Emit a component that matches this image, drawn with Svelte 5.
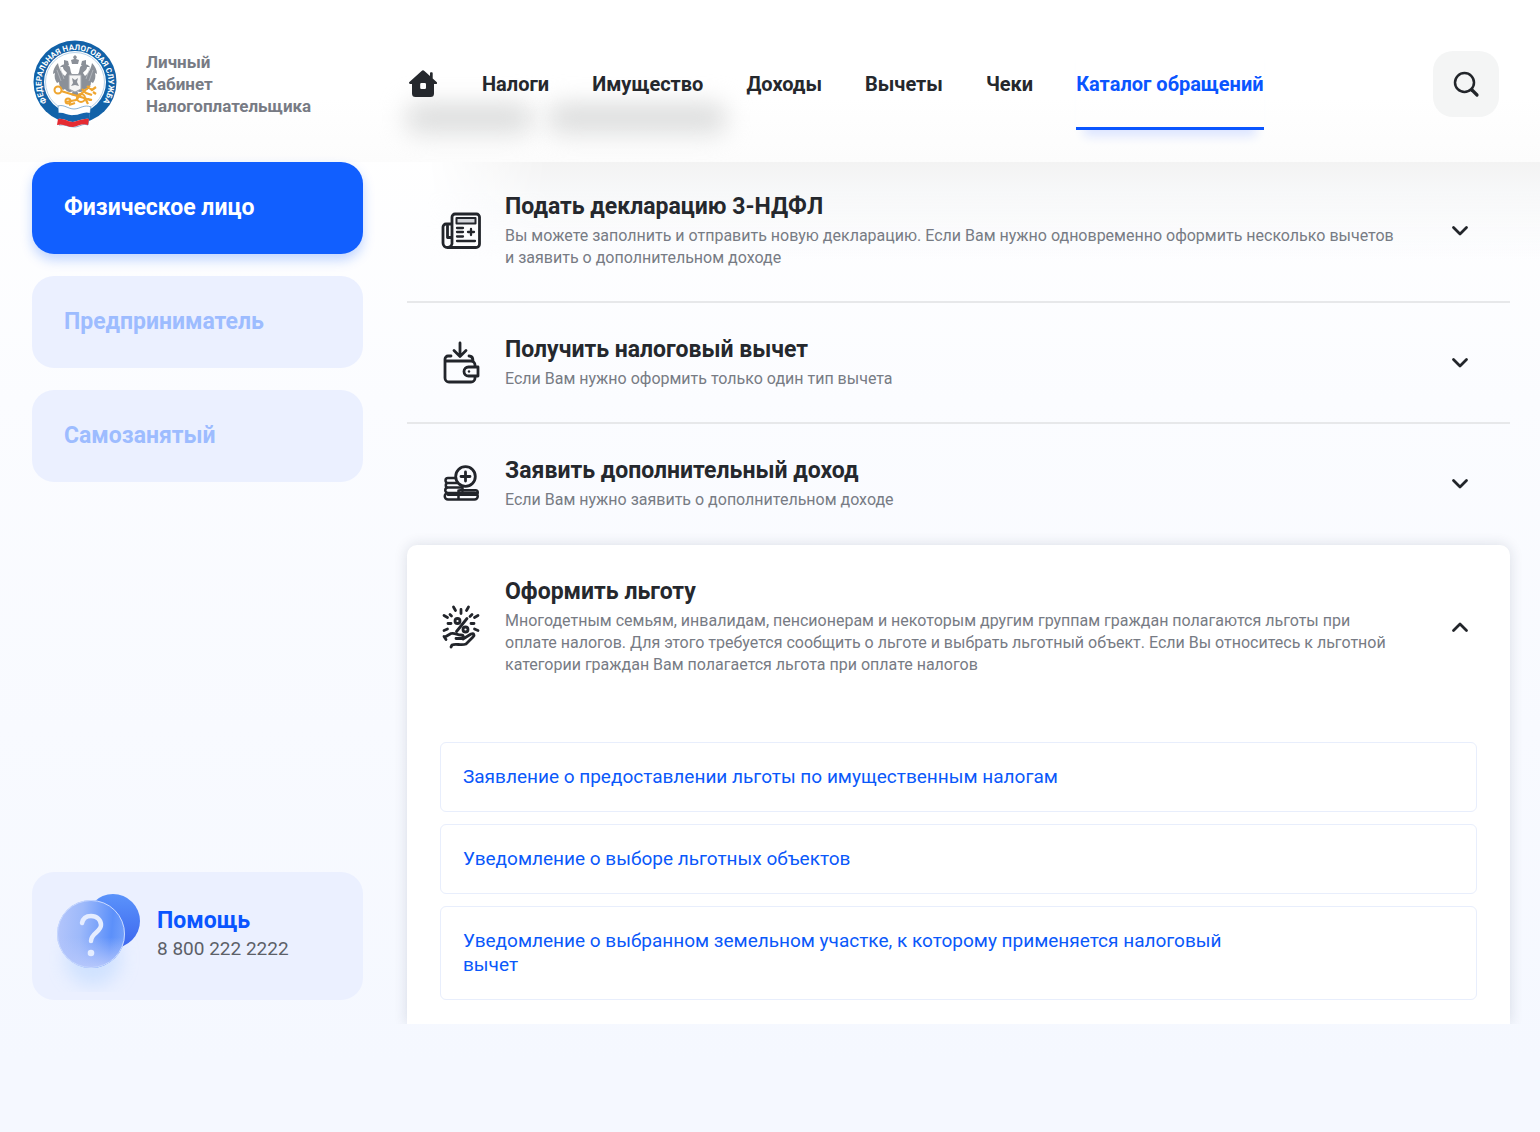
<script>
  const navItems = ['Налоги', 'Имущество', 'Доходы', 'Вычеты', 'Чеки', 'Каталог обращений'];
  const roles = ['Физическое лицо', 'Предприниматель', 'Самозанятый'];
  const sections = [
    {
      icon: 'declaration',
      title: 'Подать декларацию 3-НДФЛ',
      text: 'Вы можете заполнить и отправить новую декларацию. Если Вам нужно одновременно оформить несколько вычетов и заявить о дополнительном доходе',
      links: []
    },
    {
      icon: 'wallet',
      title: 'Получить налоговый вычет',
      text: 'Если Вам нужно оформить только один тип вычета',
      links: []
    },
    {
      icon: 'coins',
      title: 'Заявить дополнительный доход',
      text: 'Если Вам нужно заявить о дополнительном доходе',
      links: []
    },
    {
      icon: 'benefit',
      title: 'Оформить льготу',
      text: 'Многодетным семьям, инвалидам, пенсионерам и некоторым другим группам граждан полагаются льготы при оплате налогов. Для этого требуется сообщить о льготе и выбрать льготный объект. Если Вы относитесь к льготной категории граждан Вам полагается льгота при оплате налогов',
      links: [
        'Заявление о предоставлении льготы по имущественным налогам',
        'Уведомление о выборе льготных объектов',
        'Уведомление о выбранном земельном участке, к которому применяется налоговый вычет'
      ]
    }
  ];

  let activeNav = $state(5);
  let activeRole = $state(0);
  let open = $state(3);
</script>

<div class="page">
  <header class="header">
    <a class="brand" href="#home">
      <svg class="logo" viewBox="0 0 84 88" aria-hidden="true">
        <defs>
          <path id="ring" d="M17.500 66.500A33.500 33.500 0 1 1 66.500 66.500" />
        </defs>
        <circle cx="42" cy="42" r="41.500" fill="#1262a8" />
        <circle cx="42" cy="42" r="31" fill="#fff" />
        <circle cx="42" cy="42" r="29.500" fill="none" stroke="#b9d2e8" stroke-width="1" />
        <text class="ring-text"><textPath href="#ring" startOffset="50%" text-anchor="middle">ФЕДЕРАЛЬНАЯ НАЛОГОВАЯ СЛУЖБА</textPath></text>
        <g fill="#8b9098">
          <path d="M42 15l2 2-1 2 3 1-1 4h-6l-1-4 3-1-1-2z" />
          <path d="M31 20l4 1 1 4h-5zM53 20l-4 1-1 4h5z" />
          <path d="M36 26c-3-3-7-2-9 1l3 0c0 3 3 4 4 6l-2 3c-3-2-6-7-7-13-3 3-5 7-5 11l2-1c-1 4 0 7 2 10l2-1c0 4 2 6 4 8l2-1c2 3 5 4 8 2l-2 4 4 1 4-1-2-4c3 2 6 1 8-2l2 1c2-2 4-4 4-8l2 1c2-3 3-6 2-10l2 1c0-4-2-8-5-11-1 6-4 11-7 13l-2-3c1-2 4-3 4-6l3 0c-2-3-6-4-9-1-2 2-1 6-3 8h-6c-2-2-1-6-3-8z" />
        </g>
        <path d="M24 30l4 11M27 27l4 12M60 30l-4 11M57 27l-4 12" stroke="#c7cbd0" stroke-width=".6" fill="none" />
        <path d="M36 35h12v14l-6 3-6-3z" fill="#f5f5f5" stroke="#a4a8ae" />
        <path d="M39 38l3 2 3-2-1 4 2 4-4-1-4 1 2-3z" fill="#8b9098" />
        <g fill="none" stroke="#efa52f">
          <circle cx="25" cy="50" r="3.500" stroke-width="2" />
          <path d="M28 51l23 7 6 2M33 62l10-2 6-7 8-7M36 65l6-2M52 58l3 6M55 59l4 1M49 49l4 4 6 2M54 46l5 4 4-3M60 52l3 2" stroke-width="2.200" />
          <circle cx="35" cy="61" r="2.500" stroke-width="2" />
          <circle cx="48" cy="58" r="4" stroke-width="2" />
        </g>
        <path d="M25 66c6-2 10 3 16 3s10-5 17-2l-3 18c-6-2-8 2-14 2s-9-3-15-2z" fill="#fff" stroke="#1262a8" stroke-width=".5" />
        <path d="M25 73c6-1 10 3 16 2 6 0 10-4 16-2l-1 6c-6-1-10 2-16 3-5 0-9-4-15-3z" fill="#1664ac" />
        <path d="M25 79c6-1 10 3 15 3 6-1 10-4 16-3l-1 6c-6-2-9 1-15 2-6 0-10-4-16-2z" fill="#e52b32" />
      </svg>
      <span class="brand-name">Личный<br />Кабинет<br />Налогоплательщика</span>
    </a>

    <nav class="nav" aria-label="Основное меню">
      <a class="home" href="#main" aria-label="Главная">
        <svg viewBox="0 0 28 28" aria-hidden="true">
          <path fill="#25282d" fill-rule="evenodd" d="M12.600.900a2 2 0 0 1 2.800 0L21 6V3.200a.9.900 0 0 1 .9-.9h.9a.9.900 0 0 1 .9.900v5.300l3.900 3.600a1.100 1.100 0 0 1-.8 2H25v9.400a3.500 3.500 0 0 1-3.500 3.500h-15A3.500 3.500 0 0 1 3 23.500V14H1.200a1.100 1.100 0 0 1-.8-1.900zM12.400 13a1.200 1.200 0 0 0-1.200 1.200v3.600a1.200 1.200 0 0 0 1.200 1.200h3.400a1.200 1.200 0 0 0 1.200-1.200v-3.600a1.200 1.200 0 0 0-1.200-1.200z" />
        </svg>
      </a>
      {#each navItems as item, i}
        <a class="nav-link" class:active={activeNav === i} href="#nav-{i}" onclick={() => (activeNav = i)}>{item}</a>
      {/each}
    </nav>

    <button class="search" type="button" aria-label="Поиск">
      <svg viewBox="0 0 28 28" fill="none" stroke="#22252a" stroke-width="2.500" stroke-linecap="round" aria-hidden="true">
        <circle cx="12.500" cy="12.500" r="9.500" />
        <path d="M20 20l5 5" stroke-width="3.200" />
      </svg>
    </button>
    <span class="haze haze-short"></span>
    <span class="haze haze-long"></span>
  </header>

  <div class="body">
    <aside class="sidebar">
      {#each roles as role, i}
        <button class="role" class:active={activeRole === i} type="button" aria-pressed={activeRole === i} onclick={() => (activeRole = i)}>{role}</button>
      {/each}

      <a class="help" href="tel:88002222222">
        <svg class="help-icon" viewBox="0 0 100 112" aria-hidden="true">
          <defs>
            <linearGradient id="disc" x1="0" y1="0" x2="0" y2="1">
              <stop offset="0" stop-color="#5b93fb" />
              <stop offset="1" stop-color="#3c66ee" />
            </linearGradient>
            <linearGradient id="glass" x1="0" y1=".4" x2="1" y2=".5">
              <stop offset="0" stop-color="#b3c5fb" />
              <stop offset=".35" stop-color="#9db9fa" />
              <stop offset=".8" stop-color="#5c90fa" />
              <stop offset="1" stop-color="#73a0fb" />
            </linearGradient>
            <linearGradient id="fade" x1="0" y1="0" x2="0" y2="1">
              <stop offset=".55" stop-color="#b6c7fc" stop-opacity="0" />
              <stop offset="1" stop-color="#b6c7fc" />
            </linearGradient>
            <filter id="soft" x="-60%" y="-60%" width="220%" height="220%"><feGaussianBlur stdDeviation="9" /></filter>
          </defs>
          <circle cx="44" cy="78" r="28" fill="#c4dcff" opacity=".7" filter="url(#soft)" />
          <circle cx="64" cy="41" r="27" fill="url(#disc)" />
          <circle cx="42" cy="54" r="34" fill="url(#glass)" />
          <circle cx="42" cy="54" r="33.500" fill="url(#fade)" stroke="#c7d8ff" stroke-width="1" />
          <path d="M33 43c1-5 4-7 9-7 6 0 10 4 10 9 0 7-10 8-10 16" fill="none" stroke="#e5edff" stroke-width="4.500" stroke-linecap="round" />
          <circle cx="42" cy="73" r="3.300" fill="#e5edff" />
        </svg>
        <span class="help-text">
          <strong>Помощь</strong>
          <span>8 800 222 2222</span>
        </span>
      </a>
    </aside>

    <main class="catalog">
      {#each sections as section, i}
        <section class="item" class:open={open === i}>
          <h2>
            <button class="summary" type="button" aria-expanded={open === i} onclick={() => (open = open === i ? -1 : i)}>
              <svg class="icon" viewBox="0 0 42 44" fill="none" stroke="#22252b" stroke-width="2.800" stroke-linecap="round" stroke-linejoin="round" aria-hidden="true">
                {#if section.icon === 'declaration'}
                  <path d="M12 33V8a3 3 0 0 1 3-3h21.500a3 3 0 0 1 3 3v27a3.500 3.500 0 0 1-3.500 3.500H7.500A4.500 4.500 0 0 1 3 34V18a3 3 0 0 1 3-3h5M12 33a4.500 4.500 0 0 1-4.500 5.500M7.500 17v11.500h3" />
                  <path d="M16.500 9h19v5.500h-19z" fill="#d3d5da" stroke-width="2" />
                  <path d="M17 19h6M17 23h6M17 27.500h6M17 32h18M31 20v6M28 23h6" stroke-width="2.300" />
                {:else if section.icon === 'wallet'}
                  <path d="M20 2v13.500M14 9.500l6 6 6-6M11 15H8a3 3 0 0 0-3 3v19a4 4 0 0 0 4 4h22a4 4 0 0 0 4-4v-2M35 26v-2a4 4 0 0 0-4-4H7M29 15c3 0 4 2 4 5M38 26h-9.500a4.500 4.500 0 0 0 0 9H38z" />
                  <circle cx="29" cy="30.500" r="1.200" stroke="none" fill="#22252b" />
                {:else if section.icon === 'coins'}
                  <circle cx="25.500" cy="14.500" r="9.800" />
                  <path d="M25.500 10v9M21 14.500h9" />
                  <path d="M15 16H8a1.800 1.800 0 0 0 0 5h9M8 21a2 2 0 0 0 0 4.500h14.500V29M8 25.500a2 2 0 0 0 0 5.500h26.500a2 2 0 0 1 0 6.500H8a2 2 0 0 1 0-6.500M20 28.200h15.500a1.500 1.500 0 0 1 0 4.500H8M18.500 28.500V37.500" stroke-width="2.500" />
                {:else}
                  <path d="M27 13.500L16.500 26.500" />
                  <circle cx="17.500" cy="16" r="2.500" />
                  <circle cx="25.500" cy="24.500" r="2.500" />
                  <path d="M21 4.500v4M13.500 2l2 3.500M28.500 2l-2 3.500M10 9.500l1.500 1.500M32 9.500l-2 2M4 10.500l3.500 2M38 10.500l-3.500 2M8 18.500h3M31 18.500h3M4 25.500l3.500-1.500M38 25.500l-3.500-1.500" />
                  <path d="M5 32l6-3.500c4-1 6 1.500 10 1.500 3 0 3 3.500 0 3.500h-5M23 34l8-5c3-1 4 1 2 3l-7 7c-5 2-10-1-14 1l-1 2M4 31.500l2 3" />
                {/if}
              </svg>
              <span class="copy">
                <span class="title">{section.title}</span>
                <span class="desc">{section.text}</span>
              </span>
              <svg class="chevron" viewBox="0 0 34 24" fill="none" stroke="#22252a" stroke-width="2.800" stroke-linecap="round" stroke-linejoin="round" aria-hidden="true">
                <path d="M10.500 8.500l6.500 6.500 6.500-6.500" />
              </svg>
            </button>
          </h2>
          {#if open === i && section.links.length}
            <div class="links">
              {#each section.links as link}
                <a href="#request"><span>{link}</span></a>
              {/each}
            </div>
          {/if}
        </section>
      {/each}
    </main>
  </div>
</div>

<style>
  :global(body) {
    margin: 0;
    background: #f5f8ff;
  }

  .page,
  .page * {
    box-sizing: border-box;
  }

  .page {
    min-height: 100vh;
    padding-bottom: 108px;
    overflow: hidden;
    background: linear-gradient(180deg, #fff 0, #fff 140px, #fbfcff 400px, #f5f8ff 1060px);
    color: #25282d;
    font-family: Roboto, "Liberation Sans", sans-serif;
  }

  a {
    color: inherit;
    text-decoration: none;
  }

  button {
    border: 0;
    font: inherit;
    color: inherit;
    text-align: left;
    cursor: pointer;
  }

  .header {
    position: relative;
    display: grid;
    grid-template-columns: 331px minmax(0, 1fr) auto;
    column-gap: 44px;
    align-items: center;
    padding: 38px 41px 32px 32px;
    background: linear-gradient(180deg, #fff 60%, #fcfcfc);
  }

  .brand {
    display: flex;
    align-items: center;
    gap: 28px;
  }

  .logo {
    flex: none;
    width: 86px;
    height: 88px;
  }

  .ring-text {
    fill: #fff;
    font-size: 8px;
    font-weight: 700;
  }

  .brand-name {
    color: #777b84;
    font-size: 17px;
    font-weight: 700;
    line-height: 22px;
  }

  .nav {
    position: relative;
    z-index: 1;
    display: flex;
    align-items: center;
    gap: 43px;
    padding-left: 2px;
  }

  .home {
    margin-right: 2px;
  }

  .home svg {
    display: block;
    width: 28px;
    height: 28px;
  }

  .nav-link {
    padding: 34px 0 31px;
    border-bottom: 3px solid transparent;
    font-size: 20px;
    font-weight: 700;
    line-height: 24px;
    white-space: nowrap;
  }

  .nav-link.active {
    border-color: #0a55ff;
    color: #0a55ff;
    box-shadow: 0 14px 10px -8px #dbe4ff;
  }

  .search {
    display: grid;
    place-items: center;
    width: 66px;
    height: 66px;
    padding: 0;
    border-radius: 20px;
    background: #f4f5f5;
  }

  .search svg {
    width: 28px;
    height: 28px;
  }

  .haze {
    position: absolute;
    top: 103px;
    height: 30px;
    border-radius: 12px;
    background: #dcdddd;
    filter: blur(12px);
  }

  .haze-short {
    left: 406px;
    width: 126px;
  }

  .haze-long {
    left: 548px;
    width: 178px;
  }

  .body {
    position: relative;
    display: grid;
    grid-template-columns: 331px minmax(0, 1fr);
    column-gap: 44px;
    padding: 0 30px 0 32px;
  }

  .body::before {
    content: "";
    position: absolute;
    top: 0;
    right: 0;
    left: 407px;
    height: 100px;
    background: linear-gradient(180deg, #f3f3f3, #f7f8f9 30%, transparent);
    mask-image: linear-gradient(90deg, transparent 20px, #000 140px);
  }

  .sidebar {
    display: flex;
    flex-direction: column;
    gap: 22px;
    padding-bottom: 24px;
  }

  .role {
    padding: 32px;
    border-radius: 22px;
    background: #ebf0ff;
    color: #9dbcff;
    font-size: 23px;
    font-weight: 700;
    line-height: 28px;
  }

  .role.active {
    background: #115fff;
    color: #fff;
    box-shadow: 0 6px 12px #115fff40;
  }

  .help {
    display: flex;
    align-items: center;
    gap: 8px;
    margin-top: auto;
    padding: 8px 17px;
    border-radius: 22px;
    background: #ebf0ff;
  }

  .help-icon {
    flex: none;
    width: 100px;
    height: 112px;
  }

  .help-text {
    display: grid;
    padding-bottom: 2px;
    color: #5c6068;
    font-size: 19px;
    line-height: 28px;
  }

  .help-text strong {
    color: #0a55ff;
    font-size: 23px;
    font-weight: 700;
  }

  .catalog {
    position: relative;
    clip-path: inset(-10px -30px 0 -30px);
  }

  .item {
    border-bottom: 2px solid #e7e8ea;
  }

  .item:nth-last-child(2) {
    border-bottom-color: transparent;
  }

  .item.open {
    padding-bottom: 24px;
    border: 0;
    border-radius: 10px 10px 0 0;
    background: #fff;
    box-shadow: 0 0 14px #1d2b4a24;
  }

  h2 {
    margin: 0;
    font: inherit;
  }

  .summary {
    display: flex;
    align-items: center;
    width: 100%;
    padding: 33px 33px 32px;
    background: none;
  }

  .item:first-child .summary {
    padding-top: 31px;
  }

  .icon {
    flex: none;
    width: 42px;
    height: 44px;
    margin-right: 23px;
  }

  .copy {
    display: grid;
    flex: 1;
    gap: 4px;
  }

  .title {
    font-size: 23px;
    font-weight: 700;
    line-height: 28px;
  }

  .desc {
    max-width: 894px;
    color: #777b84;
    font-size: 16px;
    line-height: 22px;
  }

  .chevron {
    flex: none;
    width: 34px;
    height: 24px;
    margin-left: 22px;
  }

  .open .chevron {
    transform: rotate(180deg);
  }

  .links {
    display: grid;
    gap: 12px;
    padding: 34px 33px 0;
  }

  .links a {
    padding: 22px;
    border: 1px solid #e8eefc;
    border-radius: 6px;
    color: #0a58fa;
    font-size: 19px;
    line-height: 24px;
  }

  .links span {
    display: block;
    max-width: 800px;
  }
</style>
